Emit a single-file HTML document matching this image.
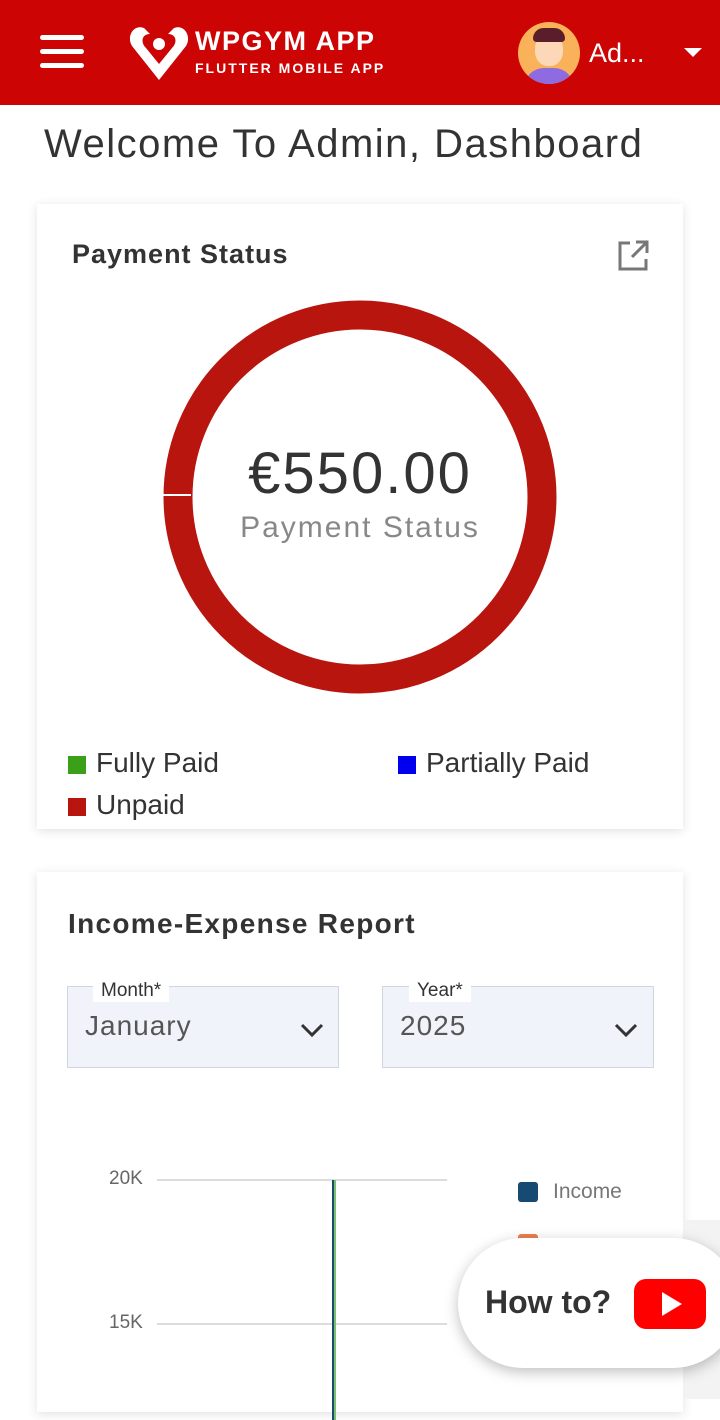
<!DOCTYPE html>
<html><head><meta charset="utf-8"><style>
*{margin:0;padding:0;box-sizing:border-box}
body{width:720px;height:1399px;overflow:hidden;background:#fff;font-family:"Liberation Sans",sans-serif;position:relative}
.hdr{position:absolute;left:0;top:0;width:720px;height:105px;background:#cc0404}
.card{position:absolute;left:37px;width:646px;background:#fff;box-shadow:0 2px 10px rgba(0,0,0,.12)}
.abs{position:absolute}
</style></head><body>
<div class="hdr">
 <div class="abs" style="left:40px;top:35px;width:44px;height:5px;background:#fff;border-radius:3px"></div>
 <div class="abs" style="left:40px;top:49px;width:44px;height:5px;background:#fff;border-radius:3px"></div>
 <div class="abs" style="left:40px;top:63px;width:44px;height:5px;background:#fff;border-radius:3px"></div>
 <svg class="abs" style="left:128px;top:22px" width="62" height="60" viewBox="0 0 62 60"><path d="M31 58 L4 24 C-2 14 6 2 16 6 L22 12 C14 12 12 20 18 26 L31 42 L44 26 C50 20 48 12 40 12 L46 6 C56 2 64 14 58 24 Z" fill="#fff"/><circle cx="31" cy="22" r="6" fill="#fff"/></svg>
 <div class="abs" style="left:195px;top:26px;color:#fff;font-weight:bold;font-size:27px;letter-spacing:1.5px">WPGYM APP</div>
 <div class="abs" style="left:195px;top:60px;color:#fff;font-weight:bold;font-size:14px;letter-spacing:2px">FLUTTER MOBILE APP</div>
 <div class="abs" style="left:518px;top:22px;width:62px;height:62px;border-radius:50%;background:#f9b25a;overflow:hidden">
  <div class="abs" style="left:17px;top:12px;width:28px;height:32px;border-radius:45%;background:#fcd8b8"></div>
  <div class="abs" style="left:15px;top:6px;width:32px;height:14px;border-radius:12px 12px 4px 4px;background:#5a1e2a"></div>
  <div class="abs" style="left:6px;top:46px;width:50px;height:24px;border-radius:20px 20px 0 0;background:#8e6be0"></div>
 </div>
 <div class="abs" style="left:589px;top:38px;color:#fff;font-size:27px">Ad...</div>
 <div class="abs" style="left:684px;top:48px;width:0;height:0;border-left:9px solid transparent;border-right:9px solid transparent;border-top:9px solid #fff"></div>
</div>
<div class="abs" style="left:44px;top:122px;font-size:40px;color:#333;letter-spacing:1.5px">Welcome To Admin, Dashboard</div>

<div class="card" style="top:204px;height:625px">
 <div class="abs" style="left:35px;top:35px;font-size:27px;color:#333;font-weight:bold;letter-spacing:1px">Payment Status</div>
 <svg class="abs" style="left:579px;top:35px" width="34" height="34" viewBox="0 0 34 34" fill="none" stroke="#777" stroke-width="3"><path d="M14 4H4v26h26V20"/><path d="M20 3h11v11M31 3L16 18"/></svg>
 <svg class="abs" style="left:0;top:0" width="646" height="520"><circle cx="323" cy="293" r="182" fill="none" stroke="#b8150f" stroke-width="29"/><line x1="124" y1="291" x2="154" y2="291" stroke="#fff" stroke-width="2"/></svg>
 <div class="abs" style="left:0;width:646px;text-align:center;top:236px;font-size:58px;color:#333;letter-spacing:2px">€550.00</div>
 <div class="abs" style="left:0;width:646px;text-align:center;top:307px;font-size:30px;color:#888;letter-spacing:2px">Payment Status</div>
 <div class="abs" style="left:31px;top:552px;width:18px;height:18px;background:#3aa01a"></div>
 <div class="abs" style="left:59px;top:543px;font-size:28px;color:#333">Fully Paid</div>
 <div class="abs" style="left:361px;top:552px;width:18px;height:18px;background:#0000ee"></div>
 <div class="abs" style="left:389px;top:543px;font-size:28px;color:#333">Partially Paid</div>
 <div class="abs" style="left:31px;top:594px;width:18px;height:18px;background:#b8150f"></div>
 <div class="abs" style="left:59px;top:585px;font-size:28px;color:#333">Unpaid</div>
</div>

<div class="card" style="top:872px;height:540px">
 <div class="abs" style="left:31px;top:36px;font-size:28px;color:#333;font-weight:bold;letter-spacing:1.3px">Income-Expense Report</div>
 <div class="abs" style="left:30px;top:114px;width:272px;height:82px;background:#f0f3f9;border:1px solid #cfd6e2"></div>
 <div class="abs" style="left:56px;top:108px;padding:0 8px;background:#fff;font-size:19px;color:#333">Month*</div>
 <div class="abs" style="left:48px;top:138px;font-size:28px;color:#555;letter-spacing:1px">January</div>
 <svg class="abs" style="left:263px;top:150px" width="24" height="16"><path d="M2 3l10 10 10-10" stroke="#333" stroke-width="3" fill="none"/></svg>
 <div class="abs" style="left:345px;top:114px;width:272px;height:82px;background:#f0f3f9;border:1px solid #cfd6e2"></div>
 <div class="abs" style="left:372px;top:108px;padding:0 8px;background:#fff;font-size:19px;color:#333">Year*</div>
 <div class="abs" style="left:363px;top:138px;font-size:28px;color:#555;letter-spacing:1px">2025</div>
 <svg class="abs" style="left:577px;top:150px" width="24" height="16"><path d="M2 3l10 10 10-10" stroke="#333" stroke-width="3" fill="none"/></svg>
 <div class="abs" style="left:72px;top:296px;font-size:19px;color:#666">20K</div>
 <div class="abs" style="left:120px;top:307px;width:290px;height:2px;background:#ddd"></div>
 <div class="abs" style="left:72px;top:440px;font-size:19px;color:#666">15K</div>
 <div class="abs" style="left:120px;top:451px;width:290px;height:2px;background:#ddd"></div>
 <div class="abs" style="left:295px;top:308px;width:2px;height:240px;background:#1a4a6e"></div>
 <div class="abs" style="left:297px;top:308px;width:2px;height:240px;background:#7ac070"></div>
 <div class="abs" style="left:481px;top:310px;width:20px;height:20px;border-radius:3px;background:#174a72"></div>
 <div class="abs" style="left:516px;top:308px;font-size:21px;color:#777">Income</div>
 <div class="abs" style="left:481px;top:362px;width:20px;height:8px;border-radius:3px;background:#e88050"></div>
</div>
<div class="abs" style="left:684px;top:1220px;width:36px;height:179px;background:#f3f3f3"></div>
<div class="abs" style="left:458px;top:1238px;width:280px;height:130px;border-radius:65px;background:#fff;box-shadow:0 4px 14px rgba(0,0,0,.25)"></div>
<div class="abs" style="left:485px;top:1284px;font-size:32px;font-weight:bold;color:#333">How to?</div>
<div class="abs" style="left:634px;top:1279px;width:72px;height:50px;border-radius:12px;background:#f00"></div>
<div class="abs" style="left:662px;top:1292px;width:0;height:0;border-top:12px solid transparent;border-bottom:12px solid transparent;border-left:20px solid #fff"></div>
</body></html>
